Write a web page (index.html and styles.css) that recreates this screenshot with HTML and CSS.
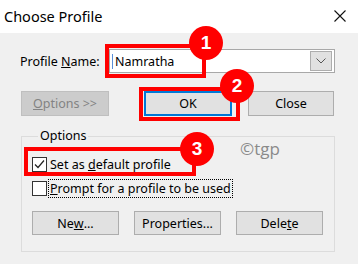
FILE: index.html
```html
<!DOCTYPE html>
<html>
<head>
<meta charset="utf-8">
<link rel="stylesheet" href="styles.css">
</head>
<body>
<div class="win">
  <div class="titlebar">
    <span class="title">Choose Profile</span>
    <svg class="close-x" width="14" height="14" viewBox="0 0 14 14"><path d="M1.5 1.5 L12.5 12.5 M12.5 1.5 L1.5 12.5" stroke="#111" stroke-width="1.1" fill="none"/></svg>
  </div>
  <div class="main">
    <div class="name-row">
      <span class="lbl">Profile <u>N</u>ame:</span>
      <div class="combo">
        <span class="combo-text"><span class="caret"></span>Namratha</span>
        <span class="drop"><svg width="10" height="6" viewBox="0 0 10 6"><path d="M0.5 0.5 L5 5 L9.5 0.5" stroke="#555" stroke-width="1" fill="none"/></svg></span>
      </div>
    </div>
    <div class="btn-row">
      <div class="btn disabled"><u>O</u>ptions &gt;&gt;</div>
      <div class="btn default">OK</div>
      <div class="btn close">Close</div>
    </div>
    <fieldset class="group">
      <legend>Options</legend>
      <div class="check">
        <span class="box"><svg width="13" height="13" viewBox="0 0 13 13"><path d="M2 6.5 L5 9.5 L11 2.5" stroke="#222" stroke-width="1.2" fill="none"/></svg></span>
        <span class="ctext">Set as <u>d</u>efault profile</span>
      </div>
      <div class="check">
        <span class="box"></span>
        <span class="ctext focus"><u>P</u>rompt for a profile to be used</span>
      </div>
      <div class="grp-btns">
        <div class="btn">Ne<u>w</u>...</div>
        <div class="btn">Properties...</div>
        <div class="btn">Dele<u>t</u>e</div>
      </div>
    </fieldset>
  </div>

  <div class="watermark">©tgp</div>
  <div class="hl hl1"></div>
  <div class="hl hl2"></div>
  <div class="hl hl3"></div>
  <div class="badge b1">1</div>
  <div class="badge b2">2</div>
  <div class="badge b3">3</div>
</div>
</body>
</html>
```

FILE: styles.css
```css
* { box-sizing: border-box; }
html, body { margin: 0; padding: 0; }
body {
  width: 358px;
  height: 264px;
  overflow: hidden;
  font-family: "Noto Sans", "Open Sans", sans-serif;
  font-size: 12px;
  color: #000;
  background: #f0f0f0;
}
.win {
  position: relative;
  width: 358px;
  height: 264px;
  background: #f0f0f0;
}
.titlebar {
  height: 33px;
  background: #fff;
  display: flex;
  align-items: center;
  justify-content: space-between;
  padding: 0 11px 1px 4px;
}
.title {
  font-size: 14.5px;
  color: #000;
}
.close-x { display: block; margin-top: -1px; }

.main {
  padding: 16px 0 0 21px;
}
.name-row {
  display: flex;
  align-items: center;
  height: 24px;
}
.lbl {
  width: 89px;
  margin-left: -1px;
  padding-top: 1px;
  font-size: 12.5px;
}
.combo {
  width: 226px;
  height: 24px;
  border: 1px solid #a8a8a8;
  background: #fff;
  display: flex;
  align-items: center;
  justify-content: space-between;
  padding: 1px;
}
.combo-text {
  display: flex;
  align-items: center;
  padding-left: 1px;
  font-size: 12.5px;
}
.caret {
  width: 1px;
  height: 15px;
  background: #5a8fd8;
  margin-right: 2px;
}
.drop {
  width: 22px;
  height: 20px;
  margin-right: 1px;
  background: #e1e1e1;
  border: 1px solid #adadad;
  display: flex;
  align-items: center;
  justify-content: center;
}
.btn-row {
  display: flex;
  margin-top: 18px;
  height: 25px;
}
.btn {
  width: 88px;
  height: 25px;
  border: 1px solid #adadad;
  background: #e1e1e1;
  display: flex;
  align-items: center;
  justify-content: center;
  font-size: 12.5px;
}
.btn.disabled {
  background: #cccccc;
  border-color: #bfbfbf;
  color: #838383;
}
.btn.default {
  margin-left: 35px;
  border: 2px solid #0078d7;
}
.btn.close {
  margin-left: 16px;
  width: 86px;
}
.group {
  margin: 12px 0 0 0;
  width: 314px;
  height: 124px;
  border: 1px solid #dcdcdc;
  padding: 10px 0 0 10px;
}
.group legend {
  padding: 0 2px;
  margin-left: 6px;
  line-height: 16px;
  font-size: 12.5px;
}
.check {
  display: flex;
  align-items: center;
  height: 20px;
  margin-bottom: 4px;
  font-size: 12.5px;
}
.box {
  width: 15px;
  height: 15px;
  border: 1px solid #333;
  background: #fff;
  display: flex;
  align-items: center;
  justify-content: center;
  margin-right: 2px;
}
.ctext { padding: 0 1px; line-height: 17px; }
.focus { outline: 1px dotted #000; outline-offset: 0; }
.grp-btns {
  display: flex;
  gap: 15px;
  margin-top: 13px;
}
.grp-btns .btn { width: 87px; height: 24px; }

.watermark {
  position: absolute;
  left: 240px;
  top: 137px;
  font-size: 17px;
  color: #8a8a8a;
  font-family: "Open Sans", "Noto Sans", sans-serif;
}
.hl {
  position: absolute;
  border: 4px solid #ff0000;
}
.hl1 { left: 105px; top: 44px; width: 101px; height: 34px; }
.hl2 { left: 139px; top: 87px; width: 101px; height: 34px; }
.hl3 { left: 24px; top: 147px; width: 172px; height: 29px; }
.badge {
  position: absolute;
  width: 34px;
  height: 34px;
  border-radius: 50%;
  background: #ff0000;
  color: #fff;
  font-family: "Liberation Sans", Arial, sans-serif;
  font-weight: bold;
  font-size: 19px;
  display: flex;
  align-items: center;
  justify-content: center;
}
.b1 { left: 189px; top: 26px; }
.b2 { left: 220px; top: 69px; }
.b3 { left: 180px; top: 132px; }
```
